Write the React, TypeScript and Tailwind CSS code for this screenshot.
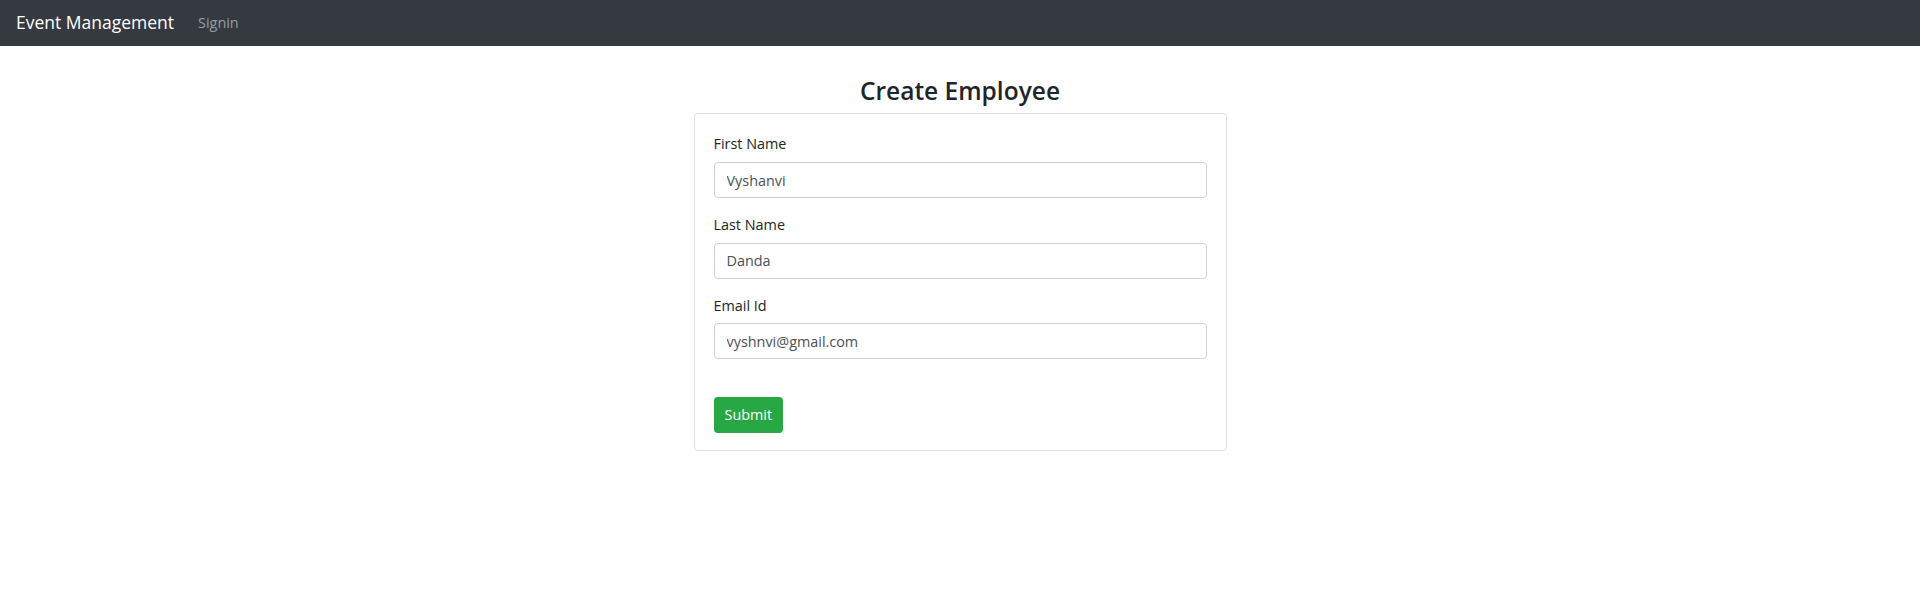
import React from 'react';

const fields = [
  { label: 'First Name', value: 'Vyshanvi' },
  { label: 'Last Name', value: 'Danda' },
  { label: 'Email Id', value: 'vyshnvi@gmail.com' },
];

const App = () => {
  return (
    <div className="min-h-screen bg-white font-['Open_Sans',sans-serif] text-[#212529]">
      <nav className="flex h-[46px] items-center bg-[#343a40] px-4">
        <a className="text-[17.5px] leading-none text-white">Event Management</a>
        <a className="ml-[24px] text-[14.4px] leading-none text-[#9a9da0]">Signin</a>
      </nav>

      <div className="flex justify-center">
        <div className="w-[533px]">
          <h2 className="mt-[30px] mb-[8px] text-center text-[24.5px] font-semibold leading-[1.2]">
            Create Employee
          </h2>
          <div className="rounded-[4px] border border-[#dfdfdf] px-[19px] pt-[19px] pb-[17px]">
            <form>
              {fields.map((f) => (
                <div key={f.label} className="mb-[16px]">
                  <label className="mb-[7px] block text-[14.4px] leading-[1.5]">{f.label}</label>
                  <input
                    readOnly
                    value={f.value}
                    className="block h-[36px] w-full rounded-[4px] border border-[#ced4da] px-[12px] text-[14.4px] text-[#495057] outline-none"
                  />
                </div>
              ))}
              <div className="h-[22px]" />
              <button
                type="button"
                className="h-[36px] rounded-[4px] bg-[#28a745] px-[11px] text-[14.4px] text-white"
              >
                Submit
              </button>
            </form>
          </div>
        </div>
      </div>
    </div>
  );
};

export default App;
